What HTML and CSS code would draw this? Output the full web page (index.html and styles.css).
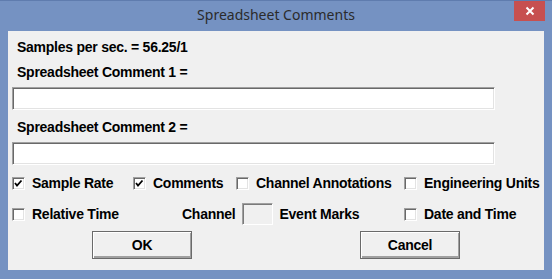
FILE: index.html
```html
<!DOCTYPE html>
<html lang="en">
<head>
    <meta charset="UTF-8">
    <title>Spreadsheet Comments</title>
    <link rel="stylesheet" href="styles.css">
</head>
<body>
    <div class="window">
        <div class="titlebar">
            <span></span>
            <span class="title">Spreadsheet Comments</span>
            <button class="close-btn">
                <svg width="10" height="10" viewBox="0 0 10 10">
                    <path d="M1.5 1.5 L8.5 8.5 M8.5 1.5 L1.5 8.5" stroke="#fff" stroke-width="2"/>
                </svg>
            </button>
        </div>
        <div class="client">
            <div class="label first">Samples per sec. = 56.25/1</div>
            <div class="label">Spreadsheet Comment 1 =</div>
            <input class="field" type="text">
            <div class="label">Spreadsheet Comment 2 =</div>
            <input class="field" type="text">

            <div class="check-row">
                <label class="check w1"><span class="box checked"></span>Sample Rate</label>
                <label class="check w2"><span class="box checked"></span>Comments</label>
                <label class="check w3"><span class="box"></span>Channel Annotations</label>
                <label class="check"><span class="box"></span>Engineering Units</label>
            </div>

            <div class="check-row second">
                <label class="check w4"><span class="box"></span>Relative Time</label>
                <div class="channel">
                    <span class="channel-label">Channel</span>
                    <input class="channel-field" type="text">
                    <span>Event Marks</span>
                </div>
                <label class="check"><span class="box"></span>Date and Time</label>
            </div>

            <div class="buttons">
                <button class="btn">OK</button>
                <button class="btn">Cancel</button>
            </div>
        </div>
    </div>
</body>
</html>
```

FILE: styles.css
```css
body {
    margin: 0;
    background-color: #7592c2;
}
.window {
    width: 552px;
    height: 279px;
    box-sizing: border-box;
    background-color: #7592c2;
    border-top: 1px solid #5f7cae;
    display: flex;
    flex-direction: column;
}
.titlebar {
    height: 30px;
    display: grid;
    grid-template-columns: 1fr auto 1fr;
    align-items: start;
}
.title {
    font-family: "Noto Sans", sans-serif;
    font-size: 14px;
    line-height: 20px;
    margin-top: 4px;
    color: #2b2b2b;
}
.close-btn {
    justify-self: end;
    width: 31px;
    height: 20px;
    margin-right: 7px;
    padding: 0;
    border: none;
    background-color: #c75050;
    display: flex;
    align-items: center;
    justify-content: center;
}
.client {
    margin: 0 8px;
    height: 239px;
    box-sizing: border-box;
    padding: 8px 4px 0 4px;
    background-color: #f0f0f0;
    font-family: "Liberation Sans", Arial, sans-serif;
    font-size: 14px;
    font-weight: bold;
    letter-spacing: -0.25px;
    line-height: 16px;
    color: #000;
    display: flex;
    flex-direction: column;
}
.label {
    margin: 9px 0 0 5px;
}
.label.first {
    margin-top: 0;
}
.field {
    width: 483px;
    height: 23px;
    box-sizing: border-box;
    margin: 7px 0 0 0;
    border: 1px solid;
    border-color: #a0a0a0 #ffffff #ffffff #a0a0a0;
    box-shadow: inset 1px 1px #696969, inset -1px -1px #e3e3e3;
    background-color: #fff;
    outline: none;
}
.check-row {
    display: flex;
    align-items: center;
    margin-top: 10px;
    height: 16px;
}
.check-row.second {
    margin-top: 12px;
    height: 22px;
}
.check {
    display: flex;
    align-items: center;
    gap: 7px;
    white-space: nowrap;
}
.w1 { width: 121px; }
.w2 { width: 103px; }
.w3 { width: 168px; }
.w4 { width: 170px; }
.box {
    width: 13px;
    height: 13px;
    box-sizing: border-box;
    border: 1px solid;
    border-color: #a0a0a0 #ffffff #ffffff #a0a0a0;
    box-shadow: inset 1px 1px #696969, inset -1px -1px #e3e3e3;
    background-color: #fff;
    flex-shrink: 0;
}
.box.checked {
    background-image: url("data:image/svg+xml,%3Csvg xmlns='http://www.w3.org/2000/svg' width='11' height='11'%3E%3Cpath d='M2 5 L4 7.5 L8.5 2.5' stroke='black' stroke-width='1.8' fill='none'/%3E%3C/svg%3E");
    background-repeat: no-repeat;
    background-position: 0 0;
}
.channel {
    width: 222px;
    display: flex;
    align-items: center;
}
.channel-label {
    margin-right: 7px;
}
.channel-field {
    width: 31px;
    height: 22px;
    box-sizing: border-box;
    margin: 0 6px 0 0;
    border: 1px solid;
    border-color: #a0a0a0 #ffffff #ffffff #a0a0a0;
    box-shadow: inset 1px 1px #7a7a7a;
    background-color: #f0f0f0;
    outline: none;
}
.buttons {
    display: flex;
    gap: 168px;
    margin: 6px 0 0 80px;
}
.btn {
    width: 100px;
    height: 28px;
    box-sizing: border-box;
    border: 1px solid #6a6a6a;
    box-shadow: inset 1px 1px #ffffff, inset -1px -2px #a0a0a0;
    background-color: #f0f0f0;
    font: inherit;
    letter-spacing: inherit;
    padding: 0 0 1px 0;
}
```
